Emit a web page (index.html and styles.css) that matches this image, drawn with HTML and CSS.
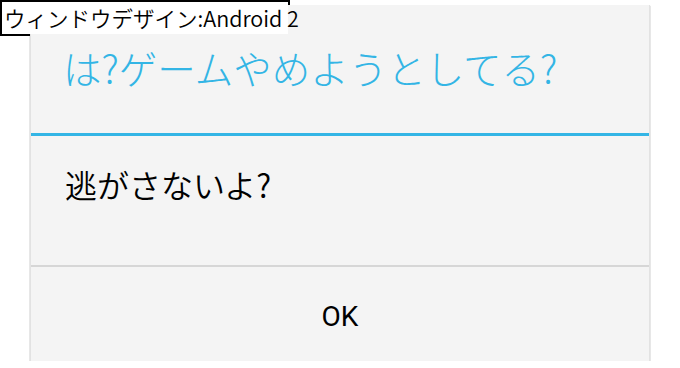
FILE: index.html
```html
<!DOCTYPE html>
<html lang="ja">
<head>
    <meta charset="UTF-8">
    <title>ウィンドウデザイン</title>
    <link rel="stylesheet" href="styles.css">
</head>
<body>
    <div class="caption">
        <span>ウィンドウデザイン:Android 2</span>
    </div>
    <div class="dialog">
        <div class="dialog-title">は?ゲームやめようとしてる?</div>
        <div class="dialog-message">逃がさないよ?</div>
        <div class="dialog-buttons">
            <button class="btn">OK</button>
        </div>
    </div>
</body>
</html>
```
FILE: styles.css
```css
*{
    margin: 0;
    padding: 0;
    box-sizing: border-box;
}
body{
    background: #fff;
    font-family: "Noto Sans CJK JP", "Noto Sans", sans-serif;
}
.caption{
    position: absolute;
    top: 0;
    left: 0;
    width: 290px;
    height: 36px;
    border: 2px solid #000;
}
.caption span{
    position: relative;
    z-index: 2;
    display: block;
    height: 100%;
    background: #fff;
    font-size: 21.5px;
    font-weight: 350;
    line-height: 32px;
    padding-left: 2px;
    color: #000;
    white-space: nowrap;
}
.dialog{
    position: relative;
    z-index: 1;
    width: 620px;
    margin: 5px 0 0 30px;
    background: #f4f4f4;
    border-left: 1px solid #e2e2e2;
    border-right: 1px solid #e2e2e2;
    box-shadow: 0 1px 1px rgba(0,0,0,0.55);
}
.dialog-title{
    height: 131px;
    display: flex;
    align-items: center;
    padding: 0 0 4px 32px;
    border-bottom: 3px solid #33b5e5;
    color: #33b5e5;
    font-size: 38.5px;
    font-weight: 300;
}
.dialog-message{
    height: 131px;
    padding: 24px 0 0 34px;
    border-bottom: 2px solid #d6d6d6;
    color: #000;
    font-size: 32px;
    font-weight: 350;
    line-height: 48px;
}
.dialog-buttons{
    height: 94px;
    display: flex;
}
.btn{
    flex: 1;
    border: none;
    background: transparent;
    font-family: Roboto, "Noto Sans", sans-serif;
    font-size: 28px;
    padding-top: 4px;
    color: #000;
}
```
